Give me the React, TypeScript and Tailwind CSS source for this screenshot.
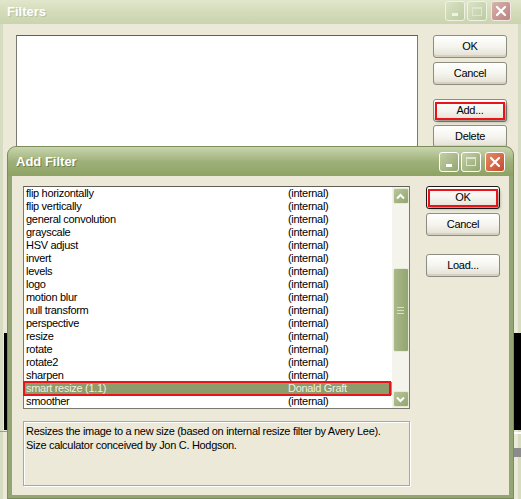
const FILTERS: [string, string][] = [
  ["flip horizontally", "(internal)"],
  ["flip vertically", "(internal)"],
  ["general convolution", "(internal)"],
  ["grayscale", "(internal)"],
  ["HSV adjust", "(internal)"],
  ["invert", "(internal)"],
  ["levels", "(internal)"],
  ["logo", "(internal)"],
  ["motion blur", "(internal)"],
  ["null transform", "(internal)"],
  ["perspective", "(internal)"],
  ["resize", "(internal)"],
  ["rotate", "(internal)"],
  ["rotate2", "(internal)"],
  ["sharpen", "(internal)"],
  ["smart resize (1.1)", "Donald Graft"],
  ["smoother", "(internal)"],
];

const SELECTED = 15;

function XpButton({ label, focused, marked }: { label: string; focused?: boolean; marked?: boolean }) {
  return (
    <div
      className={`relative w-[74px] h-[23px] rounded-[3px] border ${
        focused ? "border-[#1a1a1a]" : "border-[#8c8c80]"
      } bg-gradient-to-b from-white via-[#f5f4ee] to-[#e2dfd3] flex items-center justify-center text-black shadow-[inset_0_-2px_0_#d6d0c0]`}
    >
      <span>{label}</span>
      {marked && (
        <div className="absolute left-[1px] right-[1px] top-[2px] bottom-[1px] border-2 border-[#e8141a] shadow-[2px_2px_3px_rgba(0,0,0,0.3)]" />
      )}
    </div>
  );
}

function TitleButtons({ active }: { active: boolean }) {
  const box = active
    ? "bg-gradient-to-br from-[#c2cfa3] to-[#93a672] border-white"
    : "bg-gradient-to-br from-[#dbe3c8] to-[#bccaa0] border-[#eef2e4]";
  const close = active
    ? "bg-gradient-to-br from-[#e88a66] to-[#c4492b] border-white"
    : "bg-gradient-to-br from-[#d9b2ad] to-[#b8847e] border-[#f2e8e6]";
  return (
    <div className="flex items-center gap-[2px]">
      <div className={`w-[20px] h-[20px] rounded-[3px] border ${box} flex items-end justify-center pb-[4px]`}>
        <div className={`w-[6px] h-[3px] ${active ? "bg-white" : "bg-[#eef2e4]"}`} />
      </div>
      <div className={`w-[20px] h-[20px] rounded-[3px] border ${box} flex items-center justify-center`}>
        <div className="w-[10px] h-[9px] border border-[#dfe6cf] border-t-2" />
      </div>
      <div className={`ml-[2px] w-[20px] h-[20px] rounded-[3px] border ${close} flex items-center justify-center`}>
        <svg width="12" height="12" viewBox="0 0 12 12">
          <path d="M2 2L10 10M10 2L2 10" stroke="white" strokeWidth="2.2" strokeLinecap="round" />
        </svg>
      </div>
    </div>
  );
}

function ScrollArrow({ up }: { up?: boolean }) {
  return (
    <div className="w-[16px] h-[16px] rounded-[2px] border border-[#e6ebd9] bg-gradient-to-br from-[#b8c79a] to-[#93a56f] flex items-center justify-center">
      <svg width="9" height="7" viewBox="0 0 9 7">
        <path d={up ? "M1 5.5L4.5 2L8 5.5" : "M1 1.5L4.5 5L8 1.5"} stroke="white" strokeWidth="2" fill="none" />
      </svg>
    </div>
  );
}

export default function App() {
  return (
    <div
      className="relative w-[521px] h-[499px] overflow-hidden bg-[#ECE9D8] text-[11px] tracking-[-0.3px] text-black"
      style={{ fontFamily: '"Liberation Sans", Arial, sans-serif' }}
    >
      {/* Filters window (behind) */}
      <div className="flex flex-col h-full border-x-[3px] border-[#d6dcc1]">
        <div className="h-[24px] -mx-[3px] px-[7px] flex items-center justify-between bg-gradient-to-b from-[#e1e7cc] via-[#d3dbb9] to-[#cbd4af]">
          <span className="text-white font-bold text-[13px] tracking-normal [text-shadow:1px_1px_0_#b9c19f]">Filters</span>
          <div className="pr-[3px] -mt-[2px]">
            <TitleButtons active={false} />
          </div>
        </div>
        <div className="flex gap-[15px] pl-[13px] pt-[11px]">
          <div className="w-[402px] h-[130px] bg-white border border-[#7a7a72] border-t-[#5f5f58]" />
          <div className="flex flex-col">
            <XpButton label="OK" />
            <div className="h-[4px]" />
            <XpButton label="Cancel" />
            <div className="h-[14px]" />
            <XpButton label="Add..." marked />
            <div className="h-[3px]" />
            <XpButton label="Delete" />
          </div>
        </div>
      </div>

      {/* bits of the desktop behind */}
      <div className="absolute left-[4px] top-[333px] w-[5px] h-[97px] bg-black" />
      <div className="absolute left-0 top-[431px] w-[9px] h-[1px] bg-[#9a9a9a]" />
      <div className="absolute left-[513px] top-[333px] w-[8px] h-[97px] bg-black" />
      <div className="absolute left-[513px] top-[432px] w-[8px] h-[2px] bg-white" />
      <div className="absolute left-[513px] top-[448px] w-[8px] h-[9px] bg-[#8b8b8b]" />

      {/* Add Filter window */}
      <div className="absolute left-[8px] top-[147px] w-[505px] h-[351px] flex flex-col rounded-t-[8px] bg-[#93a572] shadow-[0_0_0_1px_#7b8c5a]">
        <div className="h-[29px] shrink-0 rounded-t-[8px] px-[8px] flex items-center justify-between bg-gradient-to-b from-[#c9d5ae] via-[#9fb17a] to-[#8ea264]">
          <span className="text-white font-bold text-[13px] tracking-normal [text-shadow:1px_1px_0_#6f7f4e]">Add Filter</span>
          <TitleButtons active />
        </div>
        <div className="flex-1 mx-[4px] mb-[3px] bg-[#ECE9D8] flex flex-col pl-[11px] pt-[10px]">
          <div className="flex gap-[16px]">
            {/* list */}
            <div className="w-[387px] h-[223px] bg-white border border-[#7a7a72] border-t-[#5f5f58] flex">
              <div className="flex-1 flex flex-col">
                {FILTERS.map(([name, author], i) => (
                  <div
                    key={name}
                    className={`relative h-[13px] leading-[13px] flex pl-[2px] ${
                      i === SELECTED ? "bg-[#8e9c6c] text-[#eef0e0]" : ""
                    }`}
                  >
                    <span className="w-[262px]">{name}</span>
                    <span>{author}</span>
                    {i === SELECTED && (
                      <div className="absolute -left-[1px] right-[1px] -top-[1px] -bottom-[1px] border-2 border-[#e8141a]" />
                    )}
                  </div>
                ))}
              </div>
              <div className="w-[17px] bg-[#f4f3ec] flex flex-col items-center py-[1px]">
                <ScrollArrow up />
                <div className="flex-1 w-full flex flex-col pt-[64px] pb-[38px] items-center">
                  <div className="w-[16px] h-[84px] rounded-[2px] border border-[#e6ebd9] bg-gradient-to-r from-[#a9b98a] to-[#93a56f] flex flex-col items-center justify-center gap-[2px]">
                    <div className="w-[7px] h-[1px] bg-[#d8e0c6]" />
                    <div className="w-[7px] h-[1px] bg-[#d8e0c6]" />
                    <div className="w-[7px] h-[1px] bg-[#d8e0c6]" />
                  </div>
                </div>
                <ScrollArrow />
              </div>
            </div>
            {/* buttons */}
            <div className="flex flex-col">
              <XpButton label="OK" focused marked />
              <div className="h-[4px]" />
              <XpButton label="Cancel" />
              <div className="h-[18px]" />
              <XpButton label="Load..." />
            </div>
          </div>
          {/* description */}
          <div className="mt-[12px] w-[387px] h-[65px] border border-[#aca899] shadow-[inset_1px_1px_0_#ffffff,1px_1px_0_#ffffff] px-[2px] pt-[2px] leading-[14px]">
            <div>Resizes the image to a new size (based on internal resize filter by Avery Lee).</div>
            <div>Size calculator conceived by Jon C. Hodgson.</div>
          </div>
        </div>
      </div>
    </div>
  );
}
